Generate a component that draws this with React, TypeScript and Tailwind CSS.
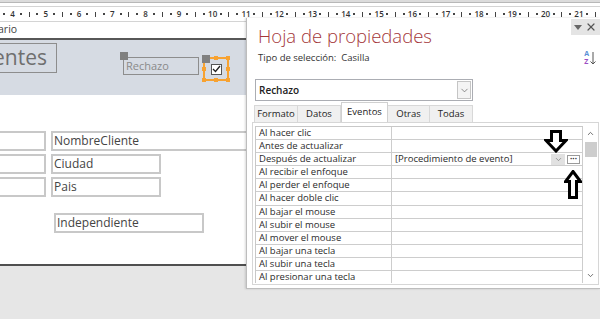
import { ChevronDown, ChevronUp, X } from "lucide-react";

const font = { fontFamily: '"Open Sans", "Noto Sans", sans-serif' };

const eventRows = [
  "Al hacer clic",
  "Antes de actualizar",
  "Después de actualizar",
  "Al recibir el enfoque",
  "Al perder el enfoque",
  "Al hacer doble clic",
  "Al bajar el mouse",
  "Al subir el mouse",
  "Al mover el mouse",
  "Al bajar una tecla",
  "Al subir una tecla",
  "Al presionar una tecla",
];

const rulerNumbers = [3, 4, 5, 6, 7, 8, 9, 10, 11, 12, 13, 14, 15, 16, 17, 18, 19, 20, 21, 22];

function Ruler() {
  return (
    <div className="h-[16px] bg-white border-y border-[#d4d4d4] overflow-hidden">
      <div className="flex ml-[-25px] h-full items-center">
        {rulerNumbers.map((n) => (
          <div key={n} className="w-[33.3px] shrink-0 grid grid-cols-4 items-center text-[8px] leading-none text-[#333]">
            <span className="text-center font-semibold">{n}</span>
            <span className="flex justify-center"><span className="w-[2px] h-[2px] bg-[#444]" /></span>
            <span className="flex justify-center"><span className="w-px h-[5px] bg-[#444]" /></span>
            <span className="flex justify-center"><span className="w-[2px] h-[2px] bg-[#444]" /></span>
          </div>
        ))}
      </div>
    </div>
  );
}

function Handle({ className }: { className: string }) {
  return <span className={`absolute w-[4px] h-[4px] bg-[#f7a231] ${className}`} />;
}

function FormHeader() {
  return (
    <div className="h-[55px] bg-[#d6dbe3] flex items-start">
      <div className="ml-[-50px] mt-[3px] w-[107px] h-[30px] border border-[#8d8d8d] flex items-center justify-end pr-[9px] text-[21px] text-[#6f6f6f]">
        entes
      </div>
      <div className="relative ml-[66px] mt-[17px] w-[76px] h-[18px] border border-[#8d8d8d] flex items-center pl-[2px] text-[11px] text-[#8a8a8a]">
        <span className="absolute left-[-4px] top-[-6px] w-[8px] h-[8px] bg-[#808080]" />
        Rechazo
      </div>
      <div className="relative ml-[4px] mt-[17px] w-[26px] h-[24px] border-2 border-[#f7a231] flex items-center justify-center">
        <span className="absolute left-[-3px] top-[-4px] w-[8px] h-[8px] bg-[#808080]" />
        <Handle className="left-[9px] top-[-3px]" />
        <Handle className="right-[-3px] top-[-3px]" />
        <Handle className="left-[-3px] top-[8px]" />
        <Handle className="right-[-3px] top-[8px]" />
        <Handle className="left-[-3px] bottom-[-3px]" />
        <Handle className="left-[9px] bottom-[-3px]" />
        <Handle className="right-[-3px] bottom-[-3px]" />
        <span className="w-[11px] h-[11px] bg-white border border-[#555] flex items-center justify-center">
          <svg width="9" height="8" viewBox="0 0 9 8">
            <path d="M1 4 L3.5 6.5 L8 1" fill="none" stroke="#222" strokeWidth="1.3" />
          </svg>
        </span>
      </div>
    </div>
  );
}

function Field({ text, className }: { text?: string; className: string }) {
  return (
    <div className={`h-[20px] border-2 border-[#c8c8c8] flex items-center pl-[1px] text-[12px] text-[#444] shrink-0 ${className}`}>
      {text}
    </div>
  );
}

function FormDetail() {
  return (
    <div className="h-[169px] bg-white flex flex-col pt-[36px] gap-[3px]">
      <div className="flex gap-[5px]">
        <Field className="ml-[-20px] w-[66px]" />
        <Field className="w-[220px]" text="NombreCliente" />
      </div>
      <div className="flex gap-[5px]">
        <Field className="ml-[-20px] w-[66px]" />
        <Field className="w-[110px]" text="Ciudad" />
      </div>
      <div className="flex gap-[5px]">
        <Field className="ml-[-20px] w-[66px]" />
        <Field className="w-[110px]" text="Pais" />
      </div>
      <Field className="ml-[54px] mt-[13px] w-[150px]" text="Independiente" />
    </div>
  );
}

function PropertySheet() {
  const tabs = ["Formato", "Datos", "Eventos", "Otras", "Todas"];
  const tabWidths = ["w-[44px]", "w-[43px]", "w-[47px]", "w-[42px]", "w-[43px]"];
  return (
    <div className="absolute left-[246px] top-[18px] w-[354px] h-[271px] bg-white border-l border-b border-[#bdbdbd] shadow-[-1px_0_2px_rgba(0,0,0,0.15)]">
      <div className="absolute right-0 top-[1px] w-[29px] h-[16px] bg-[#e4e4e4] flex items-center justify-around px-[2px]">
        <svg width="8" height="5" viewBox="0 0 8 5"><path d="M0 0 H8 L4 5 Z" fill="#666" /></svg>
        <X size={12} strokeWidth={2.4} className="text-[#555]" />
      </div>

      <div className="pl-[11px] pt-[4px] text-[18.5px] font-light leading-[28px] text-[#a4373a]">Hoja de propiedades</div>
      <div className="flex items-center justify-between pl-[11px] pr-[4px]">
        <span className="text-[9.5px] text-[#333]">Tipo de selección:&nbsp;&nbsp;Casilla</span>
        <span className="flex items-center gap-[1px]">
          <span className="flex flex-col text-[7px] leading-[8px] font-bold">
            <span className="text-[#5b8fd6]">A</span>
            <span className="text-[#9b4fc3]">Z</span>
          </span>
          <svg width="6" height="13" viewBox="0 0 6 13"><path d="M3 0 V12 M0.5 9.5 L3 12 L5.5 9.5" fill="none" stroke="#555" strokeWidth="1" /></svg>
        </span>
      </div>

      <div className="ml-[8px] mt-[13px] w-[218px] h-[22px] border border-[#abadb3] flex items-center justify-between pl-[3px] pr-[1px]">
        <span className="text-[10px] font-semibold text-[#222]">Rechazo</span>
        <span className="w-[14px] h-[18px] border border-[#c5c5c5] bg-[#f4f4f4] flex items-center justify-center">
          <ChevronDown size={11} strokeWidth={1.6} className="text-[#666]" />
        </span>
      </div>

      <div className="ml-[7px] mt-[1px] flex items-end h-[20px]">
        {tabs.map((t, i) =>
          t === "Eventos" ? (
            <div key={t} className={`${tabWidths[i]} h-[20px] bg-white border border-b-0 border-[#d0d0d0] flex items-center justify-center text-[9.5px] text-[#222]`}>
              {t}
            </div>
          ) : (
            <div key={t} className={`${tabWidths[i]} h-[17px] bg-[#f0f0f0] border border-l-0 first:border-l border-b-0 border-[#d8d8d8] flex items-center justify-center text-[9.5px] text-[#222]`}>
              {t}
            </div>
          )
        )}
      </div>

      <div className="ml-[5px] w-[347px] h-[163px] border border-[#d6d6d6] flex pl-[2px] pt-[3px]">
        <div className="w-[328px] h-[157px] overflow-hidden border-l border-t border-[#c8c8c8]">
          {eventRows.map((label, i) => (
            <div key={label} className="flex h-[13.1px] border-b border-[#cdcdcd] text-[9.5px] leading-[12px] text-[#2b2b2b]">
              <div className="w-[136px] shrink-0 border-r border-[#cdcdcd] pl-[3px] whitespace-nowrap">{label}</div>
              <div className="flex-1 flex items-center justify-between pl-[3px] pr-[2px] border-r border-[#cdcdcd]">
                {i === 2 && (
                  <>
                    <span className="whitespace-nowrap">[Procedimiento de evento]</span>
                    <span className="flex items-center gap-[2px]">
                      <span className="w-[14px] h-[11px] bg-[#e1e1e1] flex items-center justify-center">
                        <ChevronDown size={9} strokeWidth={1.8} className="text-[#777]" />
                      </span>
                      <span className="w-[13px] h-[9px] border border-[#9a9a9a] bg-white flex items-center justify-center text-[8px] leading-none font-bold text-[#333]">
                        ···
                      </span>
                    </span>
                  </>
                )}
              </div>
            </div>
          ))}
        </div>
        <div className="w-[15px] h-[157px] flex flex-col items-center justify-between py-[1px]">
          <div className="flex flex-col items-center w-full">
            <ChevronUp size={9} strokeWidth={2.2} className="text-[#555] mt-[2px]" />
            <div className="w-[12px] h-[15px] bg-[#cdcdcd] mt-[4px]" />
          </div>
          <ChevronDown size={9} strokeWidth={2.2} className="text-[#555] mb-[2px]" />
        </div>
      </div>

      <svg className="absolute left-[297px] top-[112px]" width="24" height="23" viewBox="0 0 24 23">
        <polygon points="7.5,1.5 16.5,1.5 16.5,10.5 22,10.5 12,21 2,10.5 7.5,10.5" fill="white" stroke="black" strokeWidth="3" strokeLinejoin="miter" />
      </svg>
      <svg className="absolute left-[317px] top-[152px]" width="18" height="29" viewBox="0 0 18 29">
        <polygon points="9,1.5 16.5,11.5 12.5,11.5 12.5,27.5 5.5,27.5 5.5,11.5 1.5,11.5" fill="white" stroke="black" strokeWidth="3" strokeLinejoin="miter" />
      </svg>
    </div>
  );
}

export default function App() {
  return (
    <div className="relative w-[600px] h-[319px] overflow-hidden bg-[#e6e6e6]" style={font}>
      <div className="h-[3px] bg-[#dcdcdc] border-b border-[#b8b8b8]" />
      <div className="h-[3px] bg-white" />
      <Ruler />
      <div className="h-[16px] bg-white flex items-center text-[10.5px] text-[#444] ml-[-2px]">ario</div>
      <div className="h-[2px] bg-[#575757]" />
      <FormHeader />
      <FormDetail />
      <div className="h-[2px] bg-[#4f4f4f]" />
      <PropertySheet />
    </div>
  );
}
